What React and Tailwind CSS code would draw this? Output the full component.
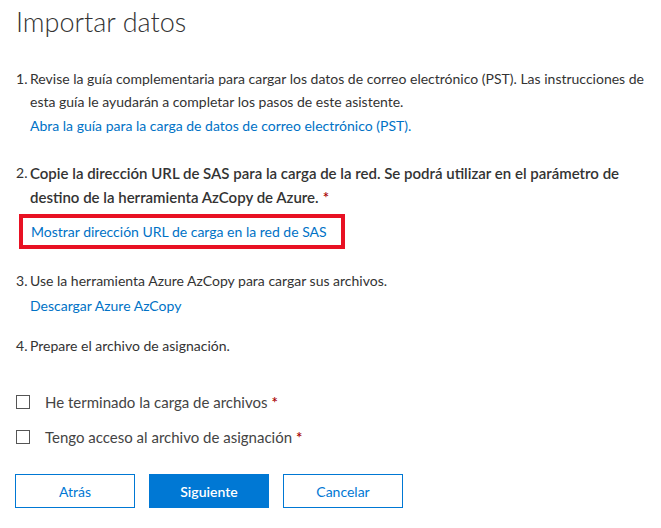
const Required = () => <span className="text-[#a80000] font-semibold ml-[4px]">*</span>;

const Step = ({ n, children }) => (
  <div className="flex">
    <span className="w-[14px] shrink-0">{n}.</span>
    <div className="flex-1">{children}</div>
  </div>
);

const Check = ({ label }) => (
  <label className="flex items-center gap-[15px] text-[15px] text-[#444] h-[20px]">
    <span className="w-[14px] h-[14px] border border-[#555] bg-white shrink-0" />
    <span>
      {label}
      <Required />
    </span>
  </label>
);

export default function App() {
  return (
    <div className="w-[661px] h-[528px] bg-white text-[#333] font-['Lato','Liberation_Sans',sans-serif] px-4 overflow-hidden">
      <h1 className="text-[27px] font-light leading-[40px] pt-[2px] text-[#333]">Importar datos</h1>

      <div className="mt-[25px] text-[14px] leading-[23px]">
        <Step n={1}>
          <p>
            Revise la guía complementaria para cargar los datos de correo electrónico (PST). Las instrucciones de
            esta guía le ayudarán a completar los pasos de este asistente.
          </p>
          <a className="block text-[#0072c6] mt-[1px]">Abra la guía para la carga de datos de correo electrónico (PST).</a>
        </Step>

        <div className="mt-[24px]">
          <Step n={2}>
            <p className="font-semibold text-[15px] leading-[24px]">
              Copie la dirección URL de SAS para la carga de la red. Se podrá utilizar en el parámetro de destino de la herramienta AzCopy de Azure.
              <Required />
            </p>
          </Step>
          <div className="mt-[5px] ml-[3px] w-[326px] h-[35px] border-[4px] border-[#e81123] flex items-center pl-[8px]">
            <a className="text-[#0072c6]">Mostrar dirección URL de carga en la red de SAS</a>
          </div>
        </div>

        <div className="mt-[20px]">
          <Step n={3}>
            <p>Use la herramienta Azure AzCopy para cargar sus archivos.</p>
            <a className="block text-[#0072c6] mt-[2px]">Descargar Azure AzCopy</a>
          </Step>
        </div>

        <div className="mt-[17px]">
          <Step n={4}>
            <p>Prepare el archivo de asignación.</p>
          </Step>
        </div>
      </div>

      <div className="mt-[35px] flex flex-col gap-[15px]">
        <Check label="He terminado la carga de archivos" />
        <Check label="Tengo acceso al archivo de asignación" />
      </div>

      <div className="mt-[27px] flex gap-[14px] -ml-px">
        <button className="w-[120px] h-[34px] border border-[#0078d4] text-[#0078d4] text-[14px]">Atrás</button>
        <button className="w-[120px] h-[34px] bg-[#0078d4] text-white text-[14px] font-semibold">Siguiente</button>
        <button className="w-[120px] h-[34px] border border-[#0078d4] text-[#0078d4] text-[14px]">Cancelar</button>
      </div>
    </div>
  );
}
